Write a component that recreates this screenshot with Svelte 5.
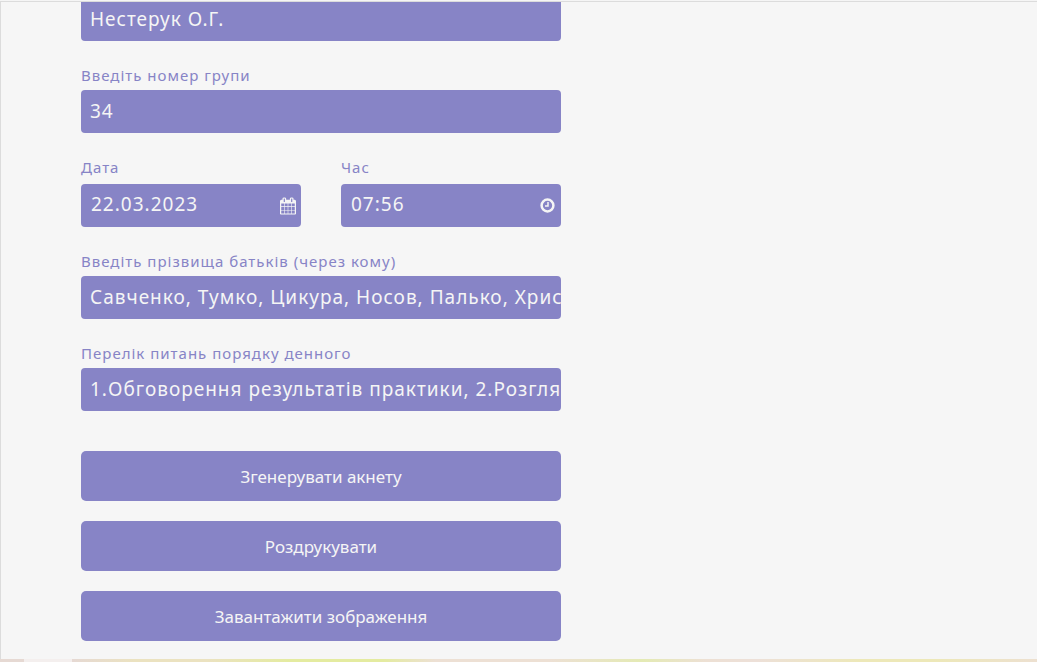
<script>
  let teacher = $state('Нестерук О.Г.');
  let group = $state('34');
  let date = $state('22.03.2023');
  let time = $state('07:56');
  let parents = $state('Савченко, Тумко, Цикура, Носов, Палько, Христенко');
  let agenda = $state('1.Обговорення результатів практики, 2.Розгляд питань');
</script>

<main class="frame">
  <form class="form" onsubmit={(e) => e.preventDefault()}>
    <div class="box"><input type="text" aria-label="Викладач" bind:value={teacher} /></div>

    <div class="field">
      <label for="group">Введіть номер групи</label>
      <div class="box"><input id="group" type="text" bind:value={group} /></div>
    </div>

    <div class="row">
      <div class="field picker">
        <label for="date">Дата</label>
        <div class="box">
          <input id="date" type="text" bind:value={date} />
          <svg width="16" height="18" viewBox="0 0 1664 1792" aria-hidden="true">
            <path fill="currentColor" d="M128 1664h288v-288H128v288zm352 0h320v-288H480v288zm-352-352h288V992H128v320zm352 0h320V992H480v320zM128 928h288V640H128v288zm736 736h320v-288H864v288zM480 928h320V640H480v288zm768 736h288v-288h-288v288zm-384-352h320V992H864v320zM512 448V160q0-13-9.500-22.500T480 128h-64q-13 0-22.500 9.500T384 160v288q0 13 9.500 22.500T416 480h64q13 0 22.500-9.500T512 448zm736 864h288V992h-288v320zM864 928h320V640H864v288zm384 0h288V640h-288v288zm32-480V160q0-13-9.500-22.500T1248 128h-64q-13 0-22.500 9.500T1152 160v288q0 13 9.500 22.500t22.500 9.500h64q13 0 22.500-9.500t9.500-22.500zm384-64v1280q0 52-38 90t-90 38H128q-52 0-90-38t-38-90V384q0-52 38-90t90-38h128v-96q0-66 47-113T416 0h64q66 0 113 47t47 113v96h384v-96q0-66 47-113t113-47h64q66 0 113 47t47 113v96h128q52 0 90 38t38 90z" />
          </svg>
        </div>
      </div>
      <div class="field picker">
        <label for="time">Час</label>
        <div class="box">
          <input id="time" type="text" bind:value={time} />
          <svg width="16" height="17" viewBox="0 0 16 17" fill="none" stroke="currentColor" aria-hidden="true">
            <circle cx="7.500" cy="8.500" r="5.900" stroke-width="2.500" />
            <path d="M8 5V9H5" stroke-width="1.500" />
          </svg>
        </div>
      </div>
    </div>

    <div class="field">
      <label for="parents">Введіть прізвища батьків (через кому)</label>
      <div class="box"><input id="parents" type="text" bind:value={parents} /></div>
    </div>

    <div class="field">
      <label for="agenda">Перелік питань порядку денного</label>
      <div class="box"><input id="agenda" type="text" bind:value={agenda} /></div>
    </div>

    <div class="actions">
      <button type="submit">Згенерувати акнету</button>
      <button type="button">Роздрукувати</button>
      <button type="button">Завантажити зображення</button>
    </div>
  </form>
</main>
<div class="strip"><span></span></div>

<style>
  :global(body) {
    margin: 0;
    background: #f5f5f5;
  }

  .frame {
    margin-top: 1px;
    padding: 0 80px 18px;
    border-top: 1px solid #dcdcdc;
    border-left: 1px solid #dcdcdc;
    background: #f6f6f6;
    overflow: hidden;
    font-family: 'Segoe UI', 'Noto Sans', 'Open Sans', sans-serif;
  }

  .form {
    max-width: 480px;
    margin-top: -4px;
  }

  .field {
    display: flex;
    flex-direction: column;
    gap: 3px;
    padding-top: 22px;
  }

  .picker {
    flex: 1;
    min-width: 0;
    gap: 5px;
  }

  .row {
    display: flex;
    gap: 40px;
  }

  label {
    color: #8784c6;
    font-size: 15px;
    line-height: 24px;
    letter-spacing: 1px;
  }

  .box {
    display: flex;
    align-items: center;
    height: 43px;
    border-radius: 4px;
    background: #8784c6;
    color: #f5f5f5;
    overflow: hidden;
  }

  .picker .box {
    padding-right: 5px;
  }

  input {
    flex: 1;
    min-width: 0;
    box-sizing: border-box;
    height: 100%;
    margin: 0;
    padding: 0 0 2px 9px;
    border: 0;
    outline: 0;
    background: transparent;
    color: inherit;
    font: inherit;
    font-size: 19px;
    letter-spacing: 1px;
  }

  .picker input {
    padding: 0 0 4px 10px;
  }

  .actions {
    display: grid;
    gap: 20px;
    margin-top: 40px;
  }

  button {
    height: 50px;
    padding: 0 10px;
    border: 0;
    border-radius: 5px;
    background: #8784c6;
    color: #f5f5f5;
    font: inherit;
    font-size: 17px;
    cursor: pointer;
  }

  .strip {
    height: 3px;
    padding-left: 24px;
    background: linear-gradient(90deg, #e6d9d3 0, #e6d9d3 7%, #ebe2c0 13%, #ebe2c0 20%, #e4eba0 28%, #e4eba0 37%, #ede0d4 42%, #ede0d4 53%, #e4eab4 62%, #ede0d4 68%, #ede0d8 73%, #ede8b8 83%, #ede8b8 90%, #ede0d0 100%);
  }

  .strip span {
    display: block;
    width: 48px;
    height: 100%;
    background: #f4efee;
  }
</style>
